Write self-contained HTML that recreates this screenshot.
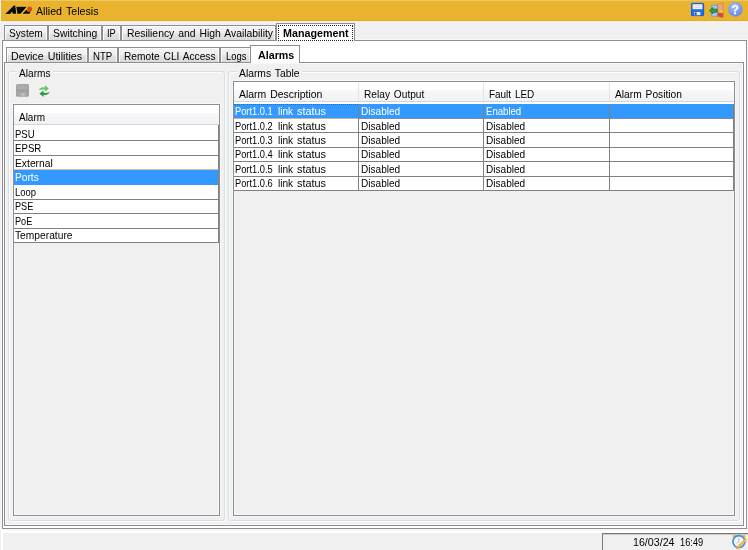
<!DOCTYPE html>
<html><head><meta charset="utf-8"><title>Allied Telesis</title>
<style>
html,body{margin:0;padding:0;}
body{width:748px;height:550px;background:#f0f0f0;position:relative;overflow:hidden;font-family:"Liberation Sans",sans-serif;font-size:11.5px;word-spacing:1.2px;color:#000;}
div,span{position:absolute;box-sizing:border-box;white-space:nowrap;}
.x{line-height:12px;transform-origin:0 50%;}
.title{left:1px;top:0;width:747px;height:21px;background:#e9b32d;border-top:1px solid #edc763;border-bottom:1px solid #e4a91c;}
svg{position:absolute;overflow:visible;z-index:5;}
.tab{height:15px;border:1px solid #8e8f94;border-bottom:none;background:linear-gradient(#f4f4f4 0%,#eeeeee 50%,#e4e4e4 55%,#dadada 100%);box-shadow:inset 1px 1px 0 rgba(255,255,255,.8),inset -1px 0 0 rgba(255,255,255,.8);}
.tab.sel{background:#fff;box-shadow:none;}
.panel{border:1px solid #8c8e94;background:#fff;box-shadow:0 0 0 1px rgba(255,255,255,.55),inset 0 0 0 1px rgba(255,255,255,.55);}
.grp{border:1px solid #d5dfe5;border-radius:3px;box-shadow:1px 1px 0 rgba(255,255,255,.8),inset 1px 1px 0 rgba(255,255,255,.8);}
.cut{background:#f0f0f0;height:3px;}
.hdr{background:linear-gradient(#fff 40%,#f6f7f9 46%,#f1f2f4 100%);border-bottom:1px solid #d5d5d5;}
.row{background:#fff;}
.rsel{background:#3399ff;}
.hl{height:1px;background:#808080;}
.vl{width:1px;background:#808080;}
</style></head><body>
<div class="title"></div>
<div style="left:0;top:0;width:1px;height:21px;background:#f6f0e0;"></div>
<!-- logo -->
<svg style="left:0;top:0;" width="40" height="21" viewBox="0 0 40 21">
 <g stroke="#f6c835" stroke-width="1.3" stroke-linejoin="round" paint-order="stroke" fill="#0a0a0a">
 <path d="M5.2 13.9 L13.8 5.6 L15.4 5.6 L16.3 13.7 L12.7 13.7 L12.5 12.3 L11.1 12.3 L10.4 13.9 Z"/>
 <path d="M16.3 6.7 L26.7 6.7 L20.6 13.7 L17.3 13.7 Z"/>
 <path d="M22.4 13.8 L26.6 9.6 L27.6 11.4 L30.8 11.6 L29.6 13.8 Z"/>
 </g>
 <circle cx="29.7" cy="9" r="2.5" fill="#d8481c"/>
</svg>
<!-- save icon -->
<svg style="left:691px;top:3px;" width="13" height="13" viewBox="0 0 13 13">
 <rect x="0" y="0" width="13" height="13" rx="1.5" fill="#1f6cf0"/>
 <rect x="0.3" y="0.3" width="12.4" height="12.4" rx="1.3" fill="none" stroke="#0d4fd0" stroke-width="0.6"/>
 <rect x="1.6" y="1.2" width="9.8" height="5" fill="#f4f4ee"/>
 <rect x="1.6" y="2.6" width="9.8" height="0.6" fill="#d8d8d0"/>
 <rect x="1.6" y="4.2" width="9.8" height="0.6" fill="#d8d8d0"/>
 <rect x="3.2" y="9" width="6.2" height="3.2" fill="#e8ecf4"/>
 <rect x="3.8" y="9.6" width="1.8" height="2.2" fill="#26324a"/>
</svg>
<!-- exit icon -->
<svg style="left:709px;top:3px;" width="15" height="15" viewBox="0 0 15 15">
 <rect x="2.6" y="2.2" width="5.8" height="11" fill="#9cc8f6" stroke="#5f94dc" stroke-width="0.8"/>
 <path d="M8.8 0.8 L14.2 0 L14.2 14.6 L8.8 13.6 Z" fill="#e8a878"/>
 <path d="M8.8 9.8 L14.2 10.2 L14.2 14.6 L8.8 13.6 Z" fill="#d44a30"/>
 <path d="M8.8 0.8 L14.2 0 L14.2 14.6 L8.8 13.6 Z" fill="none" stroke="#b9753c" stroke-width="0.5"/>
 <circle cx="12.4" cy="8" r="0.9" fill="#f6dc3c"/>
 <path d="M0.3 7.6 L3.8 4.6 L3.8 6.2 L8 6.2 L8 9.2 L3.8 9.2 L3.8 10.8 Z" fill="#35a03c" stroke="#14601c" stroke-width="0.7"/>
</svg>
<!-- help icon -->
<svg style="left:728px;top:2px;" width="15" height="15" viewBox="0 0 15 15">
 <defs><radialGradient id="hg" cx="0.4" cy="0.3" r="0.8"><stop offset="0" stop-color="#a9c2f8"/><stop offset="1" stop-color="#5a82e4"/></radialGradient></defs>
 <circle cx="7.4" cy="7.4" r="7.1" fill="url(#hg)" stroke="#7a9be8" stroke-width="0.5"/>
 <text x="8" y="12.2" font-family="Liberation Sans, sans-serif" font-weight="bold" font-size="12" text-anchor="middle" fill="#3a55a8">?</text>
 <text x="7.4" y="11.6" font-family="Liberation Sans, sans-serif" font-weight="bold" font-size="12" text-anchor="middle" fill="#fff" stroke="#fff" stroke-width="0.3">?</text>
</svg>
<!-- disabled save -->
<svg style="left:16.4px;top:84px;" width="13" height="13" viewBox="0 0 13 13">
 <rect x="0" y="0" width="13" height="12.8" rx="1.6" fill="#a3a3a3"/>
 <rect x="1.4" y="1.2" width="10.2" height="4.4" fill="#adadad"/>
 <rect x="0" y="5.8" width="13" height="0.7" fill="#999"/>
 <rect x="4.2" y="8.8" width="5.4" height="3" fill="#b4b4b4"/>
 <rect x="6" y="9.4" width="2.6" height="1.8" fill="#c6c6c6"/>
</svg>
<!-- refresh -->
<svg style="left:38px;top:84px;" width="13" height="14" viewBox="0 0 13 14">
 <path d="M0.8 6 C1.8 3.4 4.6 2.8 7 3.4 L7 1.2 L10.8 4.6 L7.2 7.8 L7.2 5.8 C5 5.2 3 5.4 0.8 6 Z" fill="#66c668"/>
 <path d="M11.6 8 C10.8 10.6 8 11.4 5.6 10.8 L5.6 13 L1.4 9.8 L5.4 6.6 L5.4 8.6 C7.6 9.2 9.6 8.8 11.6 8 Z" fill="#2f9a3c"/>
</svg>
<!-- clock icon -->
<svg style="left:732px;top:534px;" width="15" height="16" viewBox="0 0 15 16">
 <circle cx="2.6" cy="2.6" r="1.9" fill="#f1b830"/>
 <circle cx="11.6" cy="2.6" r="1.9" fill="#f1b830"/>
 <circle cx="6.9" cy="7.6" r="6" fill="#f4f8ff" stroke="#4a8fe0" stroke-width="1.7"/>
 <path d="M6.9 3.8 L6.9 7.8 L4.6 9.4" fill="none" stroke="#9ab0d0" stroke-width="0.9"/>
 <path d="M13.4 4.4 L14.6 6 L6.4 14.6 L4.6 13 Z" fill="#f5c13a" stroke="#d9962a" stroke-width="0.5"/>
 <path d="M4.6 13 L6.4 14.6 L3.6 15.6 Z" fill="#e8a070"/>
</svg>

<!-- outer tab control -->
<div class="panel" style="left:2px;top:40px;width:745px;height:489px;"></div>
<div class="tab" style="left:4px;top:25px;width:44px;"></div>
<div class="tab" style="left:48px;top:25px;width:54px;"></div>
<div class="tab" style="left:102px;top:25px;width:19px;"></div>
<div class="tab" style="left:121px;top:25px;width:155px;"></div>
<div class="tab sel" style="left:276px;top:23px;width:79px;height:18px;"></div>

<div style="left:278px;top:25px;width:75px;height:16px;border:1px dotted #222;"></div>
<!-- inner tab control -->
<div class="panel" style="left:4px;top:62px;width:740px;height:464px;background:#f0f0f0;"></div>
<div class="tab" style="left:6px;top:47px;width:82px;"></div>
<div class="tab" style="left:88px;top:47px;width:30px;"></div>
<div class="tab" style="left:118px;top:47px;width:102px;"></div>
<div class="tab" style="left:220px;top:47px;width:31px;"></div>
<div class="tab sel" style="left:250px;top:45px;width:50px;height:18px;"></div>

<!-- group boxes -->
<div class="grp" style="left:8px;top:71px;width:217px;height:450px;"></div>
<div class="cut" style="left:17px;top:70px;width:36px;"></div>
<div class="grp" style="left:228px;top:71px;width:512px;height:450px;"></div>
<div class="cut" style="left:237px;top:70px;width:65px;"></div>

<!-- left list -->
<div class="panel" style="left:13px;top:104px;width:207px;height:412px;background:#f0f0f0;"></div>
<div class="hdr" style="left:14px;top:105px;width:205px;height:20px;"></div>
<div class="row" style="left:14px;top:125px;width:205px;height:118px;"></div>
<div class="rsel" style="left:14px;top:170px;width:205px;height:15px;"></div>
<div class="hl" style="left:14px;top:140px;width:205px;"></div>
<div class="hl" style="left:14px;top:155px;width:205px;"></div>
<div class="hl" style="left:14px;top:169px;width:205px;background:#d6bfa8;"></div>
<div class="hl" style="left:14px;top:199px;width:205px;"></div>
<div class="hl" style="left:14px;top:213px;width:205px;"></div>
<div class="hl" style="left:14px;top:228px;width:205px;"></div>
<div class="hl" style="left:14px;top:242px;width:205px;"></div>
<div class="vl" style="left:218px;top:125px;height:118px;"></div>

<!-- right table -->
<div class="panel" style="left:233px;top:81px;width:502px;height:435px;background:#f0f0f0;"></div>
<div class="hdr" style="left:234px;top:82px;width:500px;height:20px;"></div>
<div style="left:358px;top:83px;width:1px;height:18px;background:#e2e3e5;"></div>
<div style="left:483px;top:83px;width:1px;height:18px;background:#e2e3e5;"></div>
<div style="left:609px;top:83px;width:1px;height:18px;background:#e2e3e5;"></div>
<div class="row" style="left:234px;top:102px;width:500px;height:88px;"></div>
<div class="rsel" style="left:234px;top:104px;width:500px;height:14px;"></div>
<div style="left:234px;top:104px;width:124px;height:1px;border-top:1px dotted #1d6fd6;"></div>
<div style="left:234px;top:118px;width:124px;height:1px;background:#cdb193;"></div>
<div style="left:358px;top:118px;width:376px;height:1px;background:#7d8da2;"></div>
<div class="hl" style="left:234px;top:132px;width:500px;"></div>
<div class="hl" style="left:234px;top:147px;width:500px;"></div>
<div class="hl" style="left:234px;top:161px;width:500px;"></div>
<div class="hl" style="left:234px;top:176px;width:500px;"></div>
<div class="hl" style="left:234px;top:190px;width:500px;"></div>
<div class="vl" style="left:358px;top:104px;height:87px;"></div>
<div class="vl" style="left:483px;top:104px;height:87px;"></div>
<div class="vl" style="left:609px;top:104px;height:87px;"></div>
<div class="vl" style="left:733px;top:104px;height:87px;"></div>

<!-- status bar -->
<div style="left:1px;top:530px;width:747px;height:3px;background:#fff;border-top:1px solid #f7f7f7;"></div>
<div style="left:1px;top:530px;width:2px;height:20px;background:#fff;"></div>
<div style="left:602px;top:533px;width:146px;height:17px;border:1px solid #7a7a7a;border-right:none;border-bottom:none;"></div>
<div style="left:603px;top:534px;width:145px;height:1px;background:#c8c8c8;"></div>

<div style="left:0;top:0;width:748px;height:550px;will-change:transform;">
<span class="x" style="left:35.9px;top:4.8px;transform:scaleX(0.926);">Allied Telesis</span>
<span class="x" style="left:8.5px;top:27.3px;transform:scaleX(0.881);">System</span>
<span class="x" style="left:52.5px;top:27.3px;transform:scaleX(0.900);">Switching</span>
<span class="x" style="left:107.2px;top:27.3px;transform:scaleX(0.809);">IP</span>
<span class="x" style="left:127.0px;top:27.3px;transform:scaleX(0.902);">Resiliency and High Availability</span>
<span class="x" style="left:283.0px;top:27.1px;transform:scaleX(0.933);font-weight:bold;">Management</span>
<span class="x" style="left:11.2px;top:49.7px;transform:scaleX(0.928);">Device Utilities</span>
<span class="x" style="left:93.0px;top:49.7px;transform:scaleX(0.839);">NTP</span>
<span class="x" style="left:123.7px;top:49.7px;transform:scaleX(0.885);">Remote CLI Access</span>
<span class="x" style="left:226.0px;top:49.7px;transform:scaleX(0.818);">Logs</span>
<span class="x" style="left:257.5px;top:48.9px;transform:scaleX(0.931);font-weight:bold;">Alarms</span>
<span class="x" style="left:19.0px;top:66.9px;transform:scaleX(0.880);">Alarms</span>
<span class="x" style="left:238.9px;top:66.9px;transform:scaleX(0.897);">Alarms Table</span>
<span class="x" style="left:19.0px;top:110.8px;transform:scaleX(0.866);">Alarm</span>
<span class="x" style="left:238.6px;top:87.9px;transform:scaleX(0.907);">Alarm Description</span>
<span class="x" style="left:364.2px;top:87.9px;transform:scaleX(0.883);">Relay Output</span>
<span class="x" style="left:489.3px;top:87.9px;transform:scaleX(0.864);">Fault LED</span>
<span class="x" style="left:614.9px;top:87.9px;transform:scaleX(0.889);">Alarm Position</span>
<span class="x" style="left:632.9px;top:536.2px;transform:scaleX(0.927);">16/03/24</span>
<span class="x" style="left:680.1px;top:536.2px;transform:scaleX(0.806);">16:49</span>
<span class="x" style="left:14.7px;top:127.5px;transform:scaleX(0.829);">PSU</span>
<span class="x" style="left:14.7px;top:142.1px;transform:scaleX(0.840);">EPSR</span>
<span class="x" style="left:14.7px;top:156.6px;transform:scaleX(0.896);">External</span>
<span class="x" style="left:14.7px;top:171.2px;transform:scaleX(0.887);color:#fff;">Ports</span>
<span class="x" style="left:14.7px;top:185.7px;transform:scaleX(0.824);">Loop</span>
<span class="x" style="left:14.7px;top:200.3px;transform:scaleX(0.795);">PSE</span>
<span class="x" style="left:14.7px;top:214.8px;transform:scaleX(0.795);">PoE</span>
<span class="x" style="left:14.7px;top:229.4px;transform:scaleX(0.891);">Temperature</span>
<span class="x" style="left:235.4px;top:105.0px;transform:scaleX(0.808);color:#fff;">Port1.0.1</span>
<span class="x" style="left:278.0px;top:105.0px;transform:scaleX(0.880);color:#fff;">link</span>
<span class="x" style="left:297.2px;top:105.0px;transform:scaleX(0.942);color:#fff;">status</span>
<span class="x" style="left:360.7px;top:105.0px;transform:scaleX(0.876);color:#fff;">Disabled</span>
<span class="x" style="left:485.8px;top:105.0px;transform:scaleX(0.834);color:#fff;">Enabled</span>
<span class="x" style="left:235.4px;top:120.0px;transform:scaleX(0.808);">Port1.0.2</span>
<span class="x" style="left:278.0px;top:120.0px;transform:scaleX(0.880);">link</span>
<span class="x" style="left:297.2px;top:120.0px;transform:scaleX(0.942);">status</span>
<span class="x" style="left:360.7px;top:120.0px;transform:scaleX(0.876);">Disabled</span>
<span class="x" style="left:485.8px;top:120.0px;transform:scaleX(0.876);">Disabled</span>
<span class="x" style="left:235.4px;top:134.4px;transform:scaleX(0.808);">Port1.0.3</span>
<span class="x" style="left:278.0px;top:134.4px;transform:scaleX(0.880);">link</span>
<span class="x" style="left:297.2px;top:134.4px;transform:scaleX(0.942);">status</span>
<span class="x" style="left:360.7px;top:134.4px;transform:scaleX(0.876);">Disabled</span>
<span class="x" style="left:485.8px;top:134.4px;transform:scaleX(0.876);">Disabled</span>
<span class="x" style="left:235.4px;top:148.0px;transform:scaleX(0.808);">Port1.0.4</span>
<span class="x" style="left:278.0px;top:148.0px;transform:scaleX(0.880);">link</span>
<span class="x" style="left:297.2px;top:148.0px;transform:scaleX(0.942);">status</span>
<span class="x" style="left:360.7px;top:148.0px;transform:scaleX(0.876);">Disabled</span>
<span class="x" style="left:485.8px;top:148.0px;transform:scaleX(0.876);">Disabled</span>
<span class="x" style="left:235.4px;top:163.1px;transform:scaleX(0.808);">Port1.0.5</span>
<span class="x" style="left:278.0px;top:163.1px;transform:scaleX(0.880);">link</span>
<span class="x" style="left:297.2px;top:163.1px;transform:scaleX(0.942);">status</span>
<span class="x" style="left:360.7px;top:163.1px;transform:scaleX(0.876);">Disabled</span>
<span class="x" style="left:485.8px;top:163.1px;transform:scaleX(0.876);">Disabled</span>
<span class="x" style="left:235.4px;top:176.9px;transform:scaleX(0.808);">Port1.0.6</span>
<span class="x" style="left:278.0px;top:176.9px;transform:scaleX(0.880);">link</span>
<span class="x" style="left:297.2px;top:176.9px;transform:scaleX(0.942);">status</span>
<span class="x" style="left:360.7px;top:176.9px;transform:scaleX(0.876);">Disabled</span>
<span class="x" style="left:485.8px;top:176.9px;transform:scaleX(0.876);">Disabled</span>
</div>
</body></html>
